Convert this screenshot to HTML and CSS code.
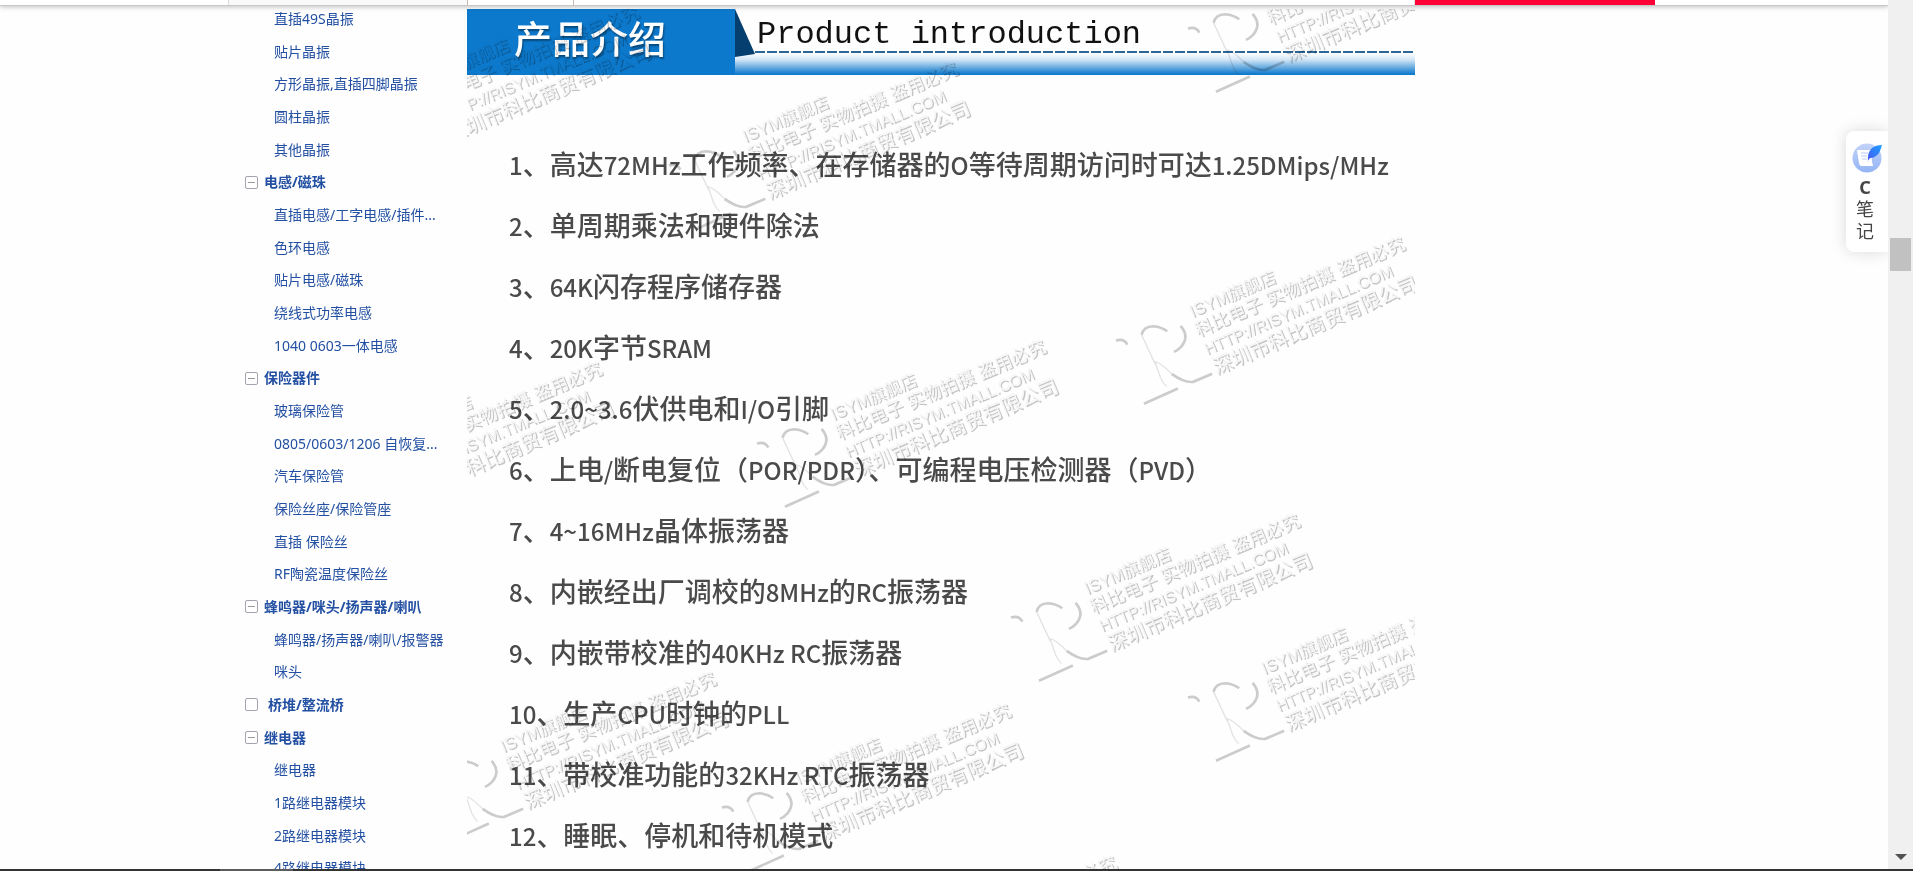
FILE: index.html
```html
<!DOCTYPE html>
<html lang="zh-CN">
<head>
  <meta charset="UTF-8">
  <meta name="viewport" content="width=device-width, initial-scale=1.0">
  <title>产品介绍</title>
  <link rel="stylesheet" href="styles.css">
</head>
<body>
  <div class="window">
    <div class="page">
      <header class="tabs">
        <div class="tabs-inner">
          <div class="tab tab-category"></div>
          <div class="tab tab-detail"></div>
          <div class="tab tab-rest"></div>
          <div class="tab tab-buy"></div>
        </div>
      </header>

      <main class="content">
        <nav class="category">
          <ul>
            <li><a href="#">直插49S晶振</a></li>
            <li><a href="#">贴片晶振</a></li>
            <li><a href="#">方形晶振,直插四脚晶振</a></li>
            <li><a href="#">圆柱晶振</a></li>
            <li><a href="#">其他晶振</a></li>
            <li class="group"><button class="toggle open" aria-label="收起"></button><a href="#">电感/磁珠</a></li>
            <li><a href="#">直插电感/工字电感/插件...</a></li>
            <li><a href="#">色环电感</a></li>
            <li><a href="#">贴片电感/磁珠</a></li>
            <li><a href="#">绕线式功率电感</a></li>
            <li><a href="#">1040 0603一体电感</a></li>
            <li class="group"><button class="toggle open" aria-label="收起"></button><a href="#">保险器件</a></li>
            <li><a href="#">玻璃保险管</a></li>
            <li><a href="#">0805/0603/1206 自恢复...</a></li>
            <li><a href="#">汽车保险管</a></li>
            <li><a href="#">保险丝座/保险管座</a></li>
            <li><a href="#">直插 保险丝</a></li>
            <li><a href="#">RF陶瓷温度保险丝</a></li>
            <li class="group"><button class="toggle open" aria-label="收起"></button><a href="#">蜂鸣器/咪头/扬声器/喇叭</a></li>
            <li><a href="#">蜂鸣器/扬声器/喇叭/报警器</a></li>
            <li><a href="#">咪头</a></li>
            <li class="group empty"><button class="toggle" aria-label="展开"></button><a href="#">桥堆/整流桥</a></li>
            <li class="group"><button class="toggle open" aria-label="收起"></button><a href="#">继电器</a></li>
            <li><a href="#">继电器</a></li>
            <li><a href="#">1路继电器模块</a></li>
            <li><a href="#">2路继电器模块</a></li>
            <li><a href="#">4路继电器模块</a></li>
          </ul>
        </nav>

        <article class="product">
          <div class="banner">
            <h1>产品介绍</h1>
            <div class="banner-right">
              <svg class="fold" width="20" height="48" viewBox="0 0 20 48"><path d="M0 0L20 45L0 48Z" fill="#053f70"/></svg>
              <p>Product introduction</p>
              <div class="dashes"></div>
              <div class="shade"></div>
            </div>
          </div>

          <ul class="features">
            <li><span>1</span>、高达<span>72MHz</span>工作频率、在存储器的<span>O</span>等待周期访问时可达<span>1.25DMips/MHz</span></li>
            <li><span>2</span>、单周期乘法和硬件除法</li>
            <li><span>3</span>、<span>64K</span>闪存程序储存器</li>
            <li><span>4</span>、<span>20K</span>字节<span>SRAM</span></li>
            <li><span>5</span>、<span>2.0~3.6</span>伏供电和<span>I/O</span>引脚</li>
            <li><span>6</span>、上电<span>/</span>断电复位（<span>POR/PDR</span>）、可编程电压检测器（<span>PVD</span>）</li>
            <li><span>7</span>、<span>4~16MHz</span>晶体振荡器</li>
            <li><span>8</span>、内嵌经出厂调校的<span>8MHz</span>的<span>RC</span>振荡器</li>
            <li><span>9</span>、内嵌带校准的<span>40KHz RC</span>振荡器</li>
            <li><span>10</span>、生产<span>CPU</span>时钟的<span>PLL</span></li>
            <li><span>11</span>、带校准功能的<span>32KHz RTC</span>振荡器</li>
            <li><span>12</span>、睡眠、停机和待机模式</li>
          </ul>

          <svg class="watermarks" aria-hidden="true">
            <defs>
              <g id="lines">
                <text font-size="17">ISYM旗舰店</text>
                <text x="-2" y="20" font-size="18">科比电子 实物拍摄 盗用必究</text>
                <text x="-1" y="40" font-size="16">HTTP://RISYM.TMALL.COM</text>
                <text y="62" font-size="20">深圳市科比商贸有限公司</text>
              </g>
              <g id="mark">
                <g transform="rotate(-23)">
                  <use href="#lines" class="dark" x="1" y="2"/>
                  <use href="#lines" class="light"/>
                </g>
                <g class="logo" transform="translate(-102 -97) scale(.333)">
                  <path class="thick" d="M78 362Q102 354 112 374M155 345Q160 320 190 319Q215 321 232 334M272 318Q300 350 274 380Q264 391 252 396M245 462Q285 490 310 486L367 462M162 552L264 506"/>
                  <path class="thin" d="M155 345L197 435M195 425L212 474Q220 492 230 500M195 425Q215 430 245 462"/>
                </g>
              </g>
            </defs>
            <use href="#mark" x="-41" y="76"/>
            <use href="#mark" x="278" y="133"/>
            <use href="#mark" x="797" y="-4"/>
            <use href="#mark" x="725" y="308"/>
            <use href="#mark" x="-78" y="433"/>
            <use href="#mark" x="366" y="411"/>
            <use href="#mark" x="620" y="585"/>
            <use href="#mark" x="797" y="665"/>
            <use href="#mark" x="36" y="743"/>
            <use href="#mark" x="331" y="775"/>
            <use href="#mark" x="437" y="927"/>
          </svg>
        </article>
      </main>

      <button class="note">
        <svg width="30" height="30" viewBox="0 0 30 30">
          <defs>
            <linearGradient id="disc" x1="0" y1="0" x2="0" y2="1">
              <stop offset="0" stop-color="#c3d3f8"/>
              <stop offset="1" stop-color="#94b5f5"/>
            </linearGradient>
            <linearGradient id="quill" x1="1" y1="0" x2="0" y2="1">
              <stop offset="0" stop-color="#1ba0ff"/>
              <stop offset="1" stop-color="#4a55f0"/>
            </linearGradient>
          </defs>
          <circle cx="15" cy="15" r="14.500" fill="url(#disc)"/>
          <path d="M5 7H19L20 19Q21 22 21 23H9Q7 22 7 20Z" fill="#fff"/>
          <path d="M9 10H16M9 13H15M10 16H15" stroke="#b8cbf7" fill="none"/>
          <path d="M16 18Q15 10 20 5Q24 2 30 2Q29 6 27 10Q23 15 18 15L15 19Z" fill="url(#quill)"/>
        </svg>
        <b>C</b>
        <span>笔</span>
        <span>记</span>
      </button>
    </div>

    <div class="scrollbar">
      <div class="thumb"></div>
      <div class="arrow"></div>
    </div>
  </div>
  <footer class="taskbar"><div class="active-app"></div></footer>
</body>
</html>
```
FILE: styles.css
```css
:root {
  --link-color: #2350a2;
  --banner-color: #0c79cc;
  --text-color: #4a4a4a;
  --red: #ff0036;
}

* {
  box-sizing: border-box;
}

body {
  margin: 0;
  height: 100vh;
  display: flex;
  flex-direction: column;
  overflow: hidden;
  background-color: #fefefe;
  font-family: "Noto Sans", "Noto Sans CJK SC", sans-serif;
}

ul, h1, p {
  margin: 0;
  padding: 0;
  list-style: none;
}

.window {
  flex: 1;
  min-height: 0;
  display: flex;
}

.page {
  flex: 1;
  position: relative;
  overflow: hidden;
}

/* bottom edge of the sticky tab bar */
.tabs {
  position: relative;
  z-index: 2;
  height: 6px;
  background-color: #fff;
  border-bottom: 1px solid #c8c8c8;
  box-shadow: 0 1px 5px rgba(0, 0, 0, 0.25);
}

.tabs-inner,
.content {
  display: grid;
  grid-template-columns: 239px 948px 245px;
  justify-content: center;
}

.tabs-inner {
  grid-template-columns: 239px 107px 841px 240px 5px;
  height: 5px;
}

.tab-category {
  background-color: #f9f9f9;
  border-left: 1px solid #ddd;
}

.tab-detail {
  border-left: 1px solid #c9b8b0;
  border-right: 1px solid #c9b8b0;
}

.tab-rest {
  border-right: 1px solid #ddd;
}

.tab-buy {
  background-color: var(--red);
}

.content {
  align-items: start;
  padding-top: 3px;
}

.category ul {
  display: grid;
  grid-auto-rows: 33px 33px 32px;
  margin-top: -7px;
}

.category li {
  display: flex;
  align-items: center;
  padding-left: 46px;
  font-size: 14px;
  line-height: 20px;
  white-space: nowrap;
}

.category a {
  color: var(--link-color);
  text-decoration: none;
}

.category a:hover {
  text-decoration: underline;
}

.category .group {
  padding-left: 17px;
  gap: 6px;
  font-weight: bold;
}

.category .empty {
  gap: 10px;
}

.toggle {
  width: 13px;
  height: 13px;
  padding: 0;
  display: flex;
  align-items: center;
  justify-content: center;
  background-color: #fff;
  border: 1px solid #a5a3ad;
  border-radius: 2px;
  cursor: pointer;
}

.toggle.open::after {
  content: '';
  width: 7px;
  height: 1px;
  background-color: #999;
}

.product {
  position: relative;
  height: 900px;
  overflow: hidden;
}

.banner {
  display: flex;
  height: 66px;
}

.banner h1 {
  width: 268px;
  padding-left: 47px;
  background-color: var(--banner-color);
  color: #fff;
  font-size: 38px;
  font-weight: 500;
  line-height: 58px;
  text-shadow: 1px 2px 2px rgba(0, 0, 0, 0.4);
}

.banner-right {
  flex: 1;
  position: relative;
  display: flex;
  flex-direction: column;
}

.fold {
  position: absolute;
  left: 0;
  top: 0;
}

.banner-right p {
  height: 42px;
  padding-left: 22px;
  color: #111;
  font-family: "Liberation Mono", monospace;
  font-size: 32px;
  line-height: 52px;
}

.dashes {
  height: 2px;
  margin-left: 20px;
  background: repeating-linear-gradient(90deg, #2a6699 0 10px, transparent 10px 12px);
}

.shade {
  flex: 1;
  background: linear-gradient(#fff, #d3e6f6 30%, #1a80cf 92%, var(--banner-color));
}

.features {
  padding: 58px 0 0 42px;
}

.features li {
  height: 61px;
  color: var(--text-color);
  font-family: "Noto Sans CJK SC", sans-serif;
  font-size: 27px;
  font-weight: 500;
  line-height: 61px;
  white-space: nowrap;
}

.features span {
  font-size: 24px;
}

.watermarks {
  position: absolute;
  left: 0;
  top: 0;
  width: 100%;
  height: 100%;
  pointer-events: none;
  mix-blend-mode: multiply;
  font-family: "Liberation Sans", "Noto Sans CJK SC", sans-serif;
}

.watermarks .dark {
  fill: #c6c6c6;
}

.watermarks .light {
  fill: #f6f6f6;
}

.logo path {
  fill: none;
}

.logo .thick {
  stroke: #cdcdcd;
  stroke-width: 8px;
}

.logo .thin {
  stroke: #e4e4e4;
  stroke-width: 4px;
}

.note {
  position: absolute;
  top: 131px;
  right: 0;
  z-index: 3;
  width: 42px;
  padding: 12px 4px 10px 0;
  display: flex;
  flex-direction: column;
  align-items: center;
  background-color: #fff;
  border: none;
  border-radius: 8px 0 0 8px;
  box-shadow: 0 0 16px rgba(0, 0, 0, 0.15);
  color: #444;
  font-family: "Noto Sans", "Noto Sans CJK SC", sans-serif;
  font-size: 18px;
  line-height: 22px;
  cursor: pointer;
}

.note svg {
  margin: 0 0 3px 4px;
}

.scrollbar {
  width: 25px;
  padding: 238px 2px 9px;
  display: flex;
  flex-direction: column;
  justify-content: space-between;
  background-color: #f0f0f0;
}

.thumb {
  width: 21px;
  height: 33px;
  background-color: #c1c1c1;
}

.arrow {
  align-self: center;
  border: 6px solid transparent;
  border-top-color: #505050;
  border-bottom: none;
}

.taskbar {
  height: 2px;
  padding-left: 220px;
  background-color: #333;
}

.active-app {
  width: 73px;
  height: 2px;
  background-color: #5c5c5c;
}
```
